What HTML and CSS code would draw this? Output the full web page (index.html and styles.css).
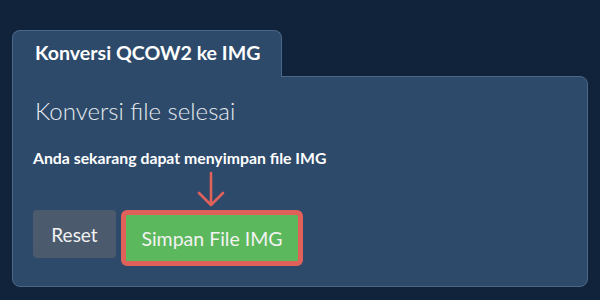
FILE: index.html
```html
<!DOCTYPE html>
<html>
<head>
<meta charset="utf-8">
<link rel="stylesheet" href="styles.css">
</head>
<body>
<div class="card">
  <div class="tab">Konversi QCOW2 ke IMG</div>
  <div class="panel">
    <h2 class="status">Konversi file selesai</h2>
    <p class="note">Anda sekarang dapat menyimpan file IMG</p>
    <div class="actions">
      <button class="btn btn-reset">Reset</button>
      <div class="save-wrap">
        <svg class="arrow" width="30" height="38" viewBox="0 0 30 38" fill="none" stroke="#e0605a" stroke-width="2.6" stroke-linecap="round" stroke-linejoin="round">
          <path d="M15 2 V34 M3 22 L15 34 L27 22"/>
        </svg>
        <button class="btn btn-save">Simpan File IMG</button>
      </div>
    </div>
  </div>
</div>
</body>
</html>
```
FILE: styles.css
```css
html, body {
  margin: 0;
  padding: 0;
  background: #11233a;
  font-family: Lato, "Open Sans", sans-serif;
  width: 600px;
  height: 300px;
  overflow: hidden;
}

.card {
  padding: 30px 12px 0 12px;
  display: flex;
  flex-direction: column;
  align-items: flex-start;
}

.tab {
  position: relative;
  z-index: 1;
  box-sizing: border-box;
  width: 270px;
  height: 47px;
  margin-bottom: -1px;
  padding: 10px 0 0 22px;
  background: #2d4a6a;
  border: 1px solid #4b6787;
  border-bottom: none;
  border-radius: 8px 8px 0 0;
  color: #ffffff;
  font-weight: 700;
  font-size: 19.6px;
  line-height: 24px;
}

.panel {
  box-sizing: border-box;
  width: 576px;
  height: 211px;
  background: #2d4a6a;
  border: 1px solid #4b6787;
  border-radius: 0 8px 8px 8px;
  padding: 19px 20px 0 20px;
}

.status {
  margin: 0 0 0 2px;
  font-weight: 300;
  font-size: 24px;
  line-height: 30px;
  color: #e6ebf0;
}

.note {
  margin: 22px 0 0 0;
  font-weight: 700;
  font-size: 15.8px;
  line-height: 20px;
  color: #ffffff;
}

.actions {
  display: flex;
  align-items: flex-start;
  margin-top: 42px;
}

.btn {
  font-family: Lato, "Open Sans", sans-serif;
  border: none;
  border-radius: 4px;
  color: #f2f2f2;
  cursor: pointer;
}

.btn-reset {
  width: 83px;
  height: 48px;
  background: #4b5b6d;
  font-size: 19px;
  padding: 0;
}

.save-wrap {
  position: relative;
  margin-left: 10px;
  margin-top: 5px;
}

.btn-save {
  display: block;
  width: 172px;
  height: 46px;
  background: #5cb85c;
  font-size: 19.5px;
  padding: 0;
  border-radius: 1px;
  outline: 5px solid #e0605a;
  outline-offset: 0;
}

.arrow {
  position: absolute;
  left: 70px;
  top: -44px;
}
```
